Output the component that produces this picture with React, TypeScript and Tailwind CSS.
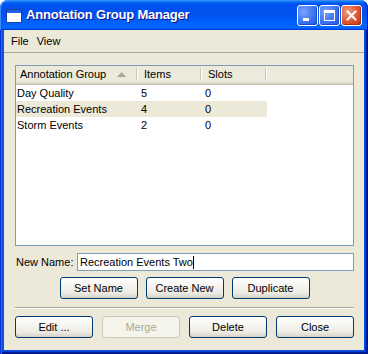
import React from 'react';

const rows = [
  { name: 'Day Quality', items: 5, slots: 0, selected: false },
  { name: 'Recreation Events', items: 4, slots: 0, selected: true },
  { name: 'Storm Events', items: 2, slots: 0, selected: false },
];

function XpButton({ label, disabled = false, className = '' }: { label: string; disabled?: boolean; className?: string }) {
  if (disabled) {
    return (
      <div className={`h-[22px] w-[78px] flex items-center justify-center rounded-[3px] border border-[#C9C7BA] bg-[#F5F4EA] text-[#ACA899] ${className}`}>
        {label}
      </div>
    );
  }
  return (
    <div
      className={`h-[22px] w-[78px] flex items-center justify-center rounded-[3px] border border-[#003C74] bg-[linear-gradient(180deg,#FFFFFF_0%,#F4F3EE_45%,#ECEBE4_75%,#D8D2C6_100%)] text-black shadow-[inset_0_-1px_#D6D0C5] ${className}`}
    >
      {label}
    </div>
  );
}

function HeaderDivider() {
  return (
    <div className="flex h-[13px]">
      <div className="w-[1px] bg-[#C7C5B2]" />
      <div className="w-[1px] bg-white" />
    </div>
  );
}

export default function App() {
  return (
    <div className="w-[368px] h-[354px] flex flex-col font-['Liberation_Sans',Arial,sans-serif] text-[11px] text-black bg-white">
      {/* title bar */}
      <div className="h-[30px] shrink-0 rounded-t-[8px] flex items-center pl-[6px] pr-[6px] bg-[linear-gradient(180deg,#0997FF_0%,#0053EE_12%,#0050EE_40%,#0066FF_88%,#0066FF_93%,#005BFF_95%,#003DD7_96%,#003DD7_100%)] shadow-[inset_1px_1px_#3C8CF8,inset_-1px_0_#00138C]">
        <svg width="16" height="14" viewBox="0 0 16 14" className="mt-[1px]">
          <rect x="0.5" y="0.5" width="15" height="13" fill="#FFFFFF" stroke="#1B3F9E" />
          <rect x="1" y="1" width="14" height="3" fill="#1D5FE6" />
        </svg>
        <span className="ml-[4px] text-white font-bold text-[13px] tracking-[-0.2px] [text-shadow:1px_1px_#0F1089]">
          Annotation Group Manager
        </span>
        <div className="ml-auto flex gap-[1px] mt-[1px]">
          <div className="w-[21px] h-[21px] rounded-[3px] border border-white bg-[radial-gradient(circle_at_30%_30%,#7AA5FB_0%,#3C74F2_55%,#2356DA_100%)] shadow-[inset_-1px_-1px_#1D47C7] flex items-end pl-[5px] pb-[4px]">
            <div className="w-[6px] h-[3px] bg-white" />
          </div>
          <div className="w-[21px] h-[21px] rounded-[3px] border border-white bg-[radial-gradient(circle_at_30%_30%,#7AA5FB_0%,#3C74F2_55%,#2356DA_100%)] shadow-[inset_-1px_-1px_#1D47C7] flex items-center justify-center">
            <div className="w-[11px] h-[11px] border border-white border-t-[3px]" />
          </div>
          <div className="w-[21px] h-[21px] rounded-[3px] border border-white bg-[radial-gradient(circle_at_30%_30%,#F09A7C_0%,#E0542F_55%,#C23A12_100%)] shadow-[inset_-1px_-1px_#A72E0B] flex items-center justify-center">
            <svg width="11" height="11" viewBox="0 0 11 11">
              <path d="M1.5 1.5 L9.5 9.5 M9.5 1.5 L1.5 9.5" stroke="#FFFFFF" strokeWidth="2" strokeLinecap="square" />
            </svg>
          </div>
        </div>
      </div>

      {/* frame + client */}
      <div className="flex-1 flex flex-col px-[4px] pb-[4px] bg-[#0855DD] shadow-[inset_1px_0_#0831D9,inset_2px_0_#166AEE,inset_-1px_-1px_#00138C,inset_-2px_-2px_#001EA0,inset_-3px_-3px_#003BDA]">
        <div className="flex-1 flex flex-col bg-[#ECE9D8]">
          {/* menu */}
          <div className="h-[23px] shrink-0 flex items-center border-b border-[#ACA899]">
            <span className="ml-[3px] px-[4px]">File</span>
            <span className="px-[4px]">View</span>
          </div>

          <div className="flex-1 flex flex-col pl-[11px] pr-[10px] pt-[12px] pb-[12px]">
            {/* list */}
            <div className="h-[181px] shrink-0 border border-[#7F9DB9] bg-white flex flex-col">
              <div className="h-[19px] shrink-0 flex bg-[#EBEADB] shadow-[inset_0_-1px_#CBC7B8,inset_0_-2px_#D6D2C2,inset_0_-3px_#E2DECD]">
                <div className="w-[122px] flex items-center pb-[2px]">
                  <span className="pl-[4px]">Annotation Group</span>
                  <svg width="9" height="5" viewBox="0 0 9 5" className="ml-auto mr-[10px]">
                    <path d="M4.5 0 L9 5 L0 5 Z" fill="#ACA899" />
                  </svg>
                  <HeaderDivider />
                </div>
                <div className="w-[64px] flex items-center pb-[2px]">
                  <span className="pl-[6px] flex-1">Items</span>
                  <HeaderDivider />
                </div>
                <div className="w-[65px] flex items-center pb-[2px]">
                  <span className="pl-[6px] flex-1">Slots</span>
                  <HeaderDivider />
                </div>
              </div>
              {rows.map((r) => (
                <div key={r.name} className={`w-[251px] h-[16px] flex leading-[16px] ${r.selected ? 'bg-[#ECE9D8]' : ''}`}>
                  <div className="w-[122px] pl-[1px]">{r.name}</div>
                  <div className="w-[64px] pl-[3px]">{r.items}</div>
                  <div className="w-[65px] pl-[3px]">{r.slots}</div>
                </div>
              ))}
            </div>

            {/* new name */}
            <div className="mt-[7px] h-[18px] flex items-center">
              <span className="w-[62px] pl-[1px]">New Name:</span>
              <div className="flex-1 h-[18px] border border-[#7F9DB9] bg-white flex items-center pl-[2px]">
                <span>Recreation Events Two</span>
                <span className="w-[1px] h-[13px] bg-black" />
              </div>
            </div>

            <div className="mt-[6px] flex justify-center gap-[8px]">
              <XpButton label="Set Name" />
              <XpButton label="Create New" />
              <XpButton label="Duplicate" />
            </div>

            <div className="mt-[8px] border-t border-[#ACA899] border-b border-b-white" />

            <div className="mt-[7px] flex justify-between">
              <XpButton label="Edit ..." />
              <XpButton label="Merge" disabled />
              <XpButton label="Delete" />
              <XpButton label="Close" />
            </div>
          </div>
        </div>
      </div>
    </div>
  );
}
